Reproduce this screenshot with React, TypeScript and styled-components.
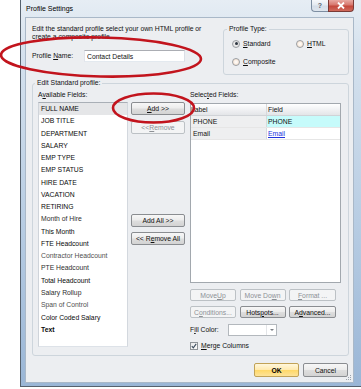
import styled, { createGlobalStyle, css } from "styled-components";

const GlobalStyle = createGlobalStyle`
  html, body { margin: 0; padding: 0; background: #fff; }
  body {
    font-family: "Liberation Sans", Arial, sans-serif;
    font-size: 6.8px;
    color: #111;
  }
  * { box-sizing: border-box; }
`;

type Tone = "dark" | "mid" | "soft";

const fields: { name: string; tone?: Tone; bold?: boolean }[] = [
  { name: "FULL NAME" },
  { name: "JOB TITLE" },
  { name: "DEPARTMENT" },
  { name: "SALARY" },
  { name: "EMP TYPE" },
  { name: "EMP STATUS" },
  { name: "HIRE DATE" },
  { name: "VACATION" },
  { name: "RETIRING" },
  { name: "Month of Hire", tone: "mid" },
  { name: "This Month", tone: "dark" },
  { name: "FTE Headcount", tone: "dark" },
  { name: "Contractor Headcount", tone: "soft" },
  { name: "PTE Headcount", tone: "mid" },
  { name: "Total Headcount", tone: "dark" },
  { name: "Salary Rollup", tone: "mid" },
  { name: "Span of Control", tone: "soft" },
  { name: "Color Coded Salary", tone: "dark" },
  { name: "Text", bold: true },
];

const toneColor = { dark: "#0a0a0a", mid: "#2e2e2e", soft: "#505050" };

const Page = styled.div`
  position: relative;
  width: 361px;
  height: 389px;
  overflow: hidden;
  padding-left: 20px;
`;

const Window = styled.div`
  width: 341px;
  height: 387px;
  display: flex;
  flex-direction: column;
  border-left: 1px solid #56616d;
  border-bottom: 1px solid #56616d;
  background: linear-gradient(180deg, #e6edf4 0px, #d6e2ee 50px, #b8cde3 220px, #9ab6d6 100%);
  padding: 0 7px 3px 4px;
`;

const TitleBar = styled.div`
  height: 17px;
  display: flex;
  align-items: flex-start;
  justify-content: space-between;
`;

const Title = styled.div`
  padding-left: 1px;
  line-height: 17px;
  font-size: 7px;
  color: #000;
`;

const CaptionButtons = styled.div`
  display: flex;
`;

const CaptionButton = styled.div<{ $close?: boolean }>`
  height: 12px;
  display: flex;
  align-items: center;
  justify-content: center;
  border: 1px solid #7d8ea2;
  border-top: none;
  ${(p) =>
    p.$close
      ? css`
          width: 26px;
          border-color: #7a3a36;
          border-radius: 0 0 4px 0;
          background: linear-gradient(180deg, #e8a9a2 0%, #d7776d 45%, #c4473b 55%, #d06a5c 100%);
        `
      : css`
          width: 17px;
          border-right: none;
          border-radius: 0 0 0 4px;
          background: linear-gradient(180deg, #f6f8fb 0%, #e4eaf1 45%, #d4dde8 55%, #dfe6ee 100%);
          color: #5b6470;
          font-size: 7px;
          font-weight: bold;
        `}
`;

const Client = styled.div`
  position: relative;
  flex: 1;
  display: flex;
  flex-direction: column;
  background: #eceef1;
  border: 1px solid #a9b8c8;
  padding: 7px 4px 0 6px;
`;

const TopRow = styled.div`
  height: 51px;
  display: flex;
  justify-content: space-between;
`;

const NameColumn = styled.div`
  display: flex;
  flex-direction: column;
`;

const Intro = styled.div`
  line-height: 8px;
`;

const NameRow = styled.div`
  margin-top: 9px;
  height: 12px;
  display: flex;
  align-items: center;
`;

const NameLabel = styled.label`
  width: 52px;
  line-height: 8px;
`;

const TextInput = styled.input`
  width: 101px;
  height: 12px;
  margin: 0;
  padding: 0 0 0 2px;
  border: 1px solid #abadb3;
  border-color: #abadb3 #dbdfe6 #e3e9ef #e2e3ea;
  background: #fff;
  font: inherit;
  color: #111;
  outline: none;
`;

const Group = styled.fieldset<{ $w: number; $h: number }>`
  margin: 0;
  padding: 0;
  min-width: 0;
  width: ${(p) => p.$w}px;
  height: ${(p) => p.$h}px;
  border: 1px solid #cdd5dc;
  border-radius: 3px;
`;

const Legend = styled.legend<{ $offset: number }>`
  margin-left: ${(p) => p.$offset}px;
  padding: 0 2px;
  line-height: 8px;
`;

const RadioGrid = styled.div`
  display: grid;
  grid-template-columns: 64px auto;
  grid-auto-rows: 9px;
  row-gap: 9px;
  padding: 6px 0 0 8px;
`;

const RadioOption = styled.label`
  display: flex;
  align-items: center;
  gap: 3px;
  line-height: 8px;
`;

const Radio = styled.span<{ $checked?: boolean }>`
  width: 8px;
  height: 8px;
  border-radius: 50%;
  border: 1px solid #9a9ea3;
  display: flex;
  align-items: center;
  justify-content: center;
  background: ${(p) =>
    p.$checked
      ? "radial-gradient(circle, #f4f4f4 0%, #dcdcdc 100%)"
      : "radial-gradient(circle, #fff 0%, #f8e6d6 70%, #efcfb4 100%)"};
  &::after {
    content: "";
    display: ${(p) => (p.$checked ? "block" : "none")};
    width: 3px;
    height: 3px;
    border-radius: 50%;
    background: #2d3540;
  }
`;

const EditGroupSpacer = styled.div`
  margin-top: 3px;
`;

const EditGrid = styled.div`
  display: grid;
  grid-template-columns: 90px 62px 151px;
  padding: 4px 7px 0 5px;
`;

const Column = styled.div`
  display: flex;
  flex-direction: column;
`;

const FieldLabel = styled.div`
  line-height: 8px;
  height: 8px;
`;

const ListBox = styled.div`
  margin-top: 3px;
  height: 245px;
  background: #fff;
  border: 1px solid #b4bac1;
  border-color: #a9afb6 #d3d8de #dde2e8 #cfd4da;
  overflow: hidden;
`;

const ListItem = styled.div<{ $selected?: boolean; $tone?: Tone; $bold?: boolean }>`
  height: 12.28px;
  line-height: 12.28px;
  padding-left: 2px;
  white-space: nowrap;
  color: ${(p) => toneColor[p.$tone ?? "dark"]};
  font-weight: ${(p) => (p.$bold ? "bold" : "normal")};
  background: ${(p) => (p.$selected ? "#e5e6e8" : "transparent")};
`;

const MiddleColumn = styled.div`
  display: flex;
  flex-direction: column;
  padding: 11px 0 0 3px;
`;

type Variant = "normal" | "disabled" | "primary";

const Button = styled.div<{ $variant?: Variant; $w?: number; $h?: number; $gap?: number }>`
  width: ${(p) => (p.$w ? `${p.$w}px` : "auto")};
  height: ${(p) => p.$h ?? 12}px;
  margin-top: ${(p) => p.$gap ?? 0}px;
  display: flex;
  align-items: center;
  justify-content: center;
  white-space: nowrap;
  border-radius: 2px;
  ${(p) =>
    p.$variant === "disabled"
      ? css`
          border: 1px solid #bcc1c5;
          background: #f3f4f5;
          color: #8d9196;
        `
      : p.$variant === "primary"
      ? css`
          border: 1px solid #c1a257;
          background: linear-gradient(180deg, #fff7dc 0%, #ffeab0 48%, #ffd868 52%, #fde39a 100%);
          color: #000;
          font-weight: bold;
        `
      : css`
          border: 1px solid #8a8d91;
          background: linear-gradient(180deg, #f7f7f7 0%, #ececec 48%, #dedede 52%, #d3d3d3 100%);
          color: #101010;
        `}
`;

const DataGrid = styled.div`
  margin-top: 4px;
  height: 180px;
  background: #fff;
  border: 1px solid #a2a8ae;
  overflow: hidden;
`;

const GridRow = styled.div<{ $header?: boolean }>`
  display: grid;
  grid-template-columns: 75px 1fr;
  height: 12px;
  border-bottom: 1px solid ${(p) => (p.$header ? "#d0d3d7" : "#e6e6e6")};
  ${(p) =>
    p.$header &&
    css`
      background: linear-gradient(180deg, #ffffff 0%, #f1f2f4 50%, #e3e5e8 100%);
    `}
`;

const Cell = styled.div<{ $bg?: string; $link?: boolean; $first?: boolean }>`
  line-height: 11px;
  overflow: hidden;
  white-space: nowrap;
  padding-left: ${(p) => (p.$first ? 2 : 1)}px;
  border-left: ${(p) => (p.$first ? "none" : "1px solid #d6d9dc")};
  background: ${(p) => p.$bg ?? "transparent"};
  ${(p) =>
    p.$link &&
    css`
      color: #2233dd;
      text-decoration: underline;
    `}
`;

const HeaderCell = styled(Cell)`
  padding-left: ${(p) => (p.$first ? 0 : 1)}px;
`;

const ButtonGrid = styled.div`
  margin-top: 6px;
  display: grid;
  grid-template-columns: 46px 46px 47px;
  grid-auto-rows: 12px;
  column-gap: 3.5px;
  row-gap: 5px;
`;

const InlineRow = styled.div<{ $gap: number; $h: number }>`
  margin-top: ${(p) => p.$gap}px;
  height: ${(p) => p.$h}px;
  display: flex;
  align-items: center;
  line-height: 8px;
`;

const FillLabel = styled.span`
  width: 38px;
`;

const Combo = styled.div`
  width: 49px;
  height: 12px;
  display: flex;
  background: #fff;
  border: 1px solid #b3b8bd;
`;

const ComboField = styled.div`
  flex: 1;
`;

const ComboArrow = styled.div`
  width: 10px;
  display: flex;
  align-items: center;
  justify-content: center;
  border-left: 1px solid #e3e5e8;
  &::after {
    content: "";
    border-left: 2px solid transparent;
    border-right: 2px solid transparent;
    border-top: 2px solid #7a7f85;
  }
`;

const CheckBox = styled.span`
  width: 8px;
  height: 8px;
  margin-right: 3px;
  display: flex;
  align-items: center;
  justify-content: center;
  border: 1px solid #8f9499;
  background: linear-gradient(135deg, #e9eaec 0%, #fbfbfb 100%);
`;

const Footer = styled.div`
  margin-top: 7px;
  padding-right: 1px;
  display: flex;
  justify-content: flex-end;
  gap: 4px;
`;

const Grip = styled.svg`
  position: absolute;
  right: 1px;
  bottom: 1px;
`;

const Annotation = styled.svg`
  position: absolute;
  left: 0;
  top: 0;
  pointer-events: none;
`;

export default function App() {
  return (
    <>
      <GlobalStyle />
      <Page>
        <Window>
          <TitleBar>
            <Title>Profile Settings</Title>
            <CaptionButtons>
              <CaptionButton>?</CaptionButton>
              <CaptionButton $close>
                <svg width="8" height="7" viewBox="0 0 8 7">
                  <path d="M1 0.5 L7 6.5 M7 0.5 L1 6.5" stroke="#fff" strokeWidth="1.8" />
                </svg>
              </CaptionButton>
            </CaptionButtons>
          </TitleBar>
          <Client>
            <TopRow>
              <NameColumn>
                <Intro>
                  Edit the standard profile select your own HTML profile or
                  <br />
                  create a composite profile
                </Intro>
                <NameRow>
                  <NameLabel>
                    Profile <u>N</u>ame:
                  </NameLabel>
                  <TextInput value="Contact Details" readOnly />
                </NameRow>
              </NameColumn>
              <Group $w={126} $h={50}>
                <Legend $offset={3}>Profile Type:</Legend>
                <RadioGrid>
                  <RadioOption>
                    <Radio $checked />
                    <span>
                      <u>S</u>tandard
                    </span>
                  </RadioOption>
                  <RadioOption>
                    <Radio />
                    <span>
                      <u>H</u>TML
                    </span>
                  </RadioOption>
                  <RadioOption>
                    <Radio />
                    <span>
                      <u>C</u>omposite
                    </span>
                  </RadioOption>
                </RadioGrid>
              </Group>
            </TopRow>
            <EditGroupSpacer>
              <Group $w={317} $h={277}>
                <Legend $offset={2}>Edit Standard profile:</Legend>
                <EditGrid>
                  <Column>
                    <FieldLabel>
                      A<u>v</u>ailable Fields:
                    </FieldLabel>
                    <ListBox>
                      {fields.map((f, i) => (
                        <ListItem key={f.name} $selected={i === 0} $tone={f.tone} $bold={f.bold}>
                          {f.name}
                        </ListItem>
                      ))}
                    </ListBox>
                  </Column>
                  <MiddleColumn>
                    <Button $w={54} $h={13}>
                      <u>A</u>dd &gt;&gt;
                    </Button>
                    <Button $w={54} $h={13} $gap={6} $variant="disabled">
                      &lt;&lt; <u>R</u>emove
                    </Button>
                    <Button $w={54} $h={13} $gap={80}>
                      Add All &gt;&gt;
                    </Button>
                    <Button $w={54} $h={13} $gap={5}>
                      &lt;&lt; R<u>e</u>move All
                    </Button>
                  </MiddleColumn>
                  <Column>
                    <FieldLabel>
                      Selec<u>t</u>ed Fields:
                    </FieldLabel>
                    <DataGrid>
                      <GridRow $header>
                        <HeaderCell $first>Label</HeaderCell>
                        <HeaderCell>Field</HeaderCell>
                      </GridRow>
                      <GridRow>
                        <Cell $first $bg="#eeeff0">PHONE</Cell>
                        <Cell $bg="#c6fbfb">PHONE</Cell>
                      </GridRow>
                      <GridRow>
                        <Cell $first $bg="#eeeff0">Email</Cell>
                        <Cell $link>Email</Cell>
                      </GridRow>
                    </DataGrid>
                    <ButtonGrid>
                      <Button $variant="disabled">
                        Move <u>U</u>p
                      </Button>
                      <Button $variant="disabled">
                        Move Do<u>w</u>n
                      </Button>
                      <Button $variant="disabled">
                        <u>F</u>ormat ...
                      </Button>
                      <Button $variant="disabled">
                        C<u>o</u>nditions...
                      </Button>
                      <Button>
                        Hots<u>p</u>ots...
                      </Button>
                      <Button>
                        A<u>d</u>vanced...
                      </Button>
                    </ButtonGrid>
                    <InlineRow $gap={6} $h={12}>
                      <FillLabel>
                        F<u>i</u>ll Color:
                      </FillLabel>
                      <Combo>
                        <ComboField />
                        <ComboArrow />
                      </Combo>
                    </InlineRow>
                    <InlineRow $gap={6} $h={8}>
                      <CheckBox>
                        <svg width="6" height="6" viewBox="0 0 6 6">
                          <path d="M0.8 3.2 L2.3 4.8 L5.2 0.9" fill="none" stroke="#3a4a5c" strokeWidth="1.1" />
                        </svg>
                      </CheckBox>
                      <span>
                        <u>M</u>erge Columns
                      </span>
                    </InlineRow>
                  </Column>
                </EditGrid>
              </Group>
            </EditGroupSpacer>
            <Footer>
              <Button $variant="primary" $w={45} $h={14}>
                OK
              </Button>
              <Button $w={45} $h={14}>
                Cancel
              </Button>
            </Footer>
            <Grip width="6" height="6" viewBox="0 0 6 6">
              {[
                [4, 0],
                [2, 2],
                [4, 2],
                [0, 4],
                [2, 4],
                [4, 4],
              ].map(([x, y]) => (
                <rect key={`${x}-${y}`} x={x} y={y} width="1" height="1" fill="#9aa2ab" />
              ))}
            </Grip>
          </Client>
        </Window>
        <Annotation width="361" height="389" viewBox="0 0 361 389">
          <ellipse cx="101" cy="57" rx="100" ry="19.5" fill="none" stroke="#c2141d" strokeWidth="2.6" transform="rotate(1.2 101 57)" />
          <ellipse cx="153.5" cy="108" rx="40.5" ry="14.5" fill="none" stroke="#c2141d" strokeWidth="2.6" />
        </Annotation>
      </Page>
    </>
  );
}
